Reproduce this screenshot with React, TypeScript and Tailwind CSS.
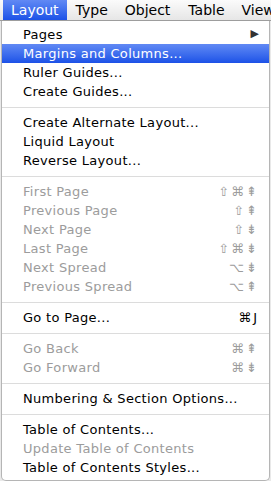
import React from "react";

type Item =
  | { kind: "sep" }
  | {
      kind: "item";
      label: string;
      keys?: string[];
      disabled?: boolean;
      active?: boolean;
      submenu?: boolean;
    };

const items: Item[] = [
  { kind: "item", label: "Pages", submenu: true },
  { kind: "item", label: "Margins and Columns...", active: true },
  { kind: "item", label: "Ruler Guides..." },
  { kind: "item", label: "Create Guides..." },
  { kind: "sep" },
  { kind: "item", label: "Create Alternate Layout..." },
  { kind: "item", label: "Liquid Layout" },
  { kind: "item", label: "Reverse Layout..." },
  { kind: "sep" },
  { kind: "item", label: "First Page", keys: ["⇧", "⌘", "⇞"], disabled: true },
  { kind: "item", label: "Previous Page", keys: ["⇧", "⇞"], disabled: true },
  { kind: "item", label: "Next Page", keys: ["⇧", "⇟"], disabled: true },
  { kind: "item", label: "Last Page", keys: ["⇧", "⌘", "⇟"], disabled: true },
  { kind: "item", label: "Next Spread", keys: ["⌥", "⇟"], disabled: true },
  { kind: "item", label: "Previous Spread", keys: ["⌥", "⇞"], disabled: true },
  { kind: "sep" },
  { kind: "item", label: "Go to Page...", keys: ["⌘", "J"] },
  { kind: "sep" },
  { kind: "item", label: "Go Back", keys: ["⌘", "⇞"], disabled: true },
  { kind: "item", label: "Go Forward", keys: ["⌘", "⇟"], disabled: true },
  { kind: "sep" },
  { kind: "item", label: "Numbering & Section Options..." },
  { kind: "sep" },
  { kind: "item", label: "Table of Contents..." },
  { kind: "item", label: "Update Table of Contents", disabled: true },
  { kind: "item", label: "Table of Contents Styles..." },
];

function MenuRow({ item }: { item: Item }) {
  if (item.kind === "sep") {
    return (
      <div className="h-[12px] flex items-center">
        <div className="h-px w-full bg-[#dcdcdc]" />
      </div>
    );
  }
  const color = item.active
    ? "text-white bg-gradient-to-b from-[#6189f4] to-[#1c51e7]"
    : item.disabled
      ? "text-[#9c9c9c]"
      : "text-black";
  return (
    <div className={`h-[19px] flex items-center justify-between pl-[21px] pr-[12px] ${color}`}>
      <span className="tracking-[0.3px]">{item.label}</span>
      {item.submenu && <span className="text-[11px] text-[#333] -mr-[2px]">▶</span>}
      {item.keys && (
        <span className="flex gap-[2px] text-[13px]">
          {item.keys.map((k, i) => (
            <span key={i}>{k}</span>
          ))}
        </span>
      )}
    </div>
  );
}

export default function App() {
  return (
    <div className="w-[271px] h-[481px] overflow-hidden bg-[#e9e9e9] font-['Lucida_Grande','DejaVu_Sans',sans-serif]">
      <div className="h-[21px] flex items-center text-[14px] bg-gradient-to-b from-[#fbfbfb] to-[#e6e6e6] border-b border-[#9d9d9d]">
        <div className="h-full ml-[3px] px-[8px] flex items-center text-white bg-gradient-to-b from-[#6189f4] to-[#1c51e7]">
          Layout
        </div>
        <span className="ml-[9px]">Type</span>
        <span className="ml-[17px]">Object</span>
        <span className="ml-[18px]">Table</span>
        <span className="ml-[17px]">View</span>
      </div>
      <div className="ml-[1px] mr-[1px] h-[460px] bg-white border-x border-b border-[#b5b5b5] rounded-b-[5px] pt-[4px] text-[13px]">
        {items.map((item, i) => (
          <MenuRow key={i} item={item} />
        ))}
      </div>
    </div>
  );
}
